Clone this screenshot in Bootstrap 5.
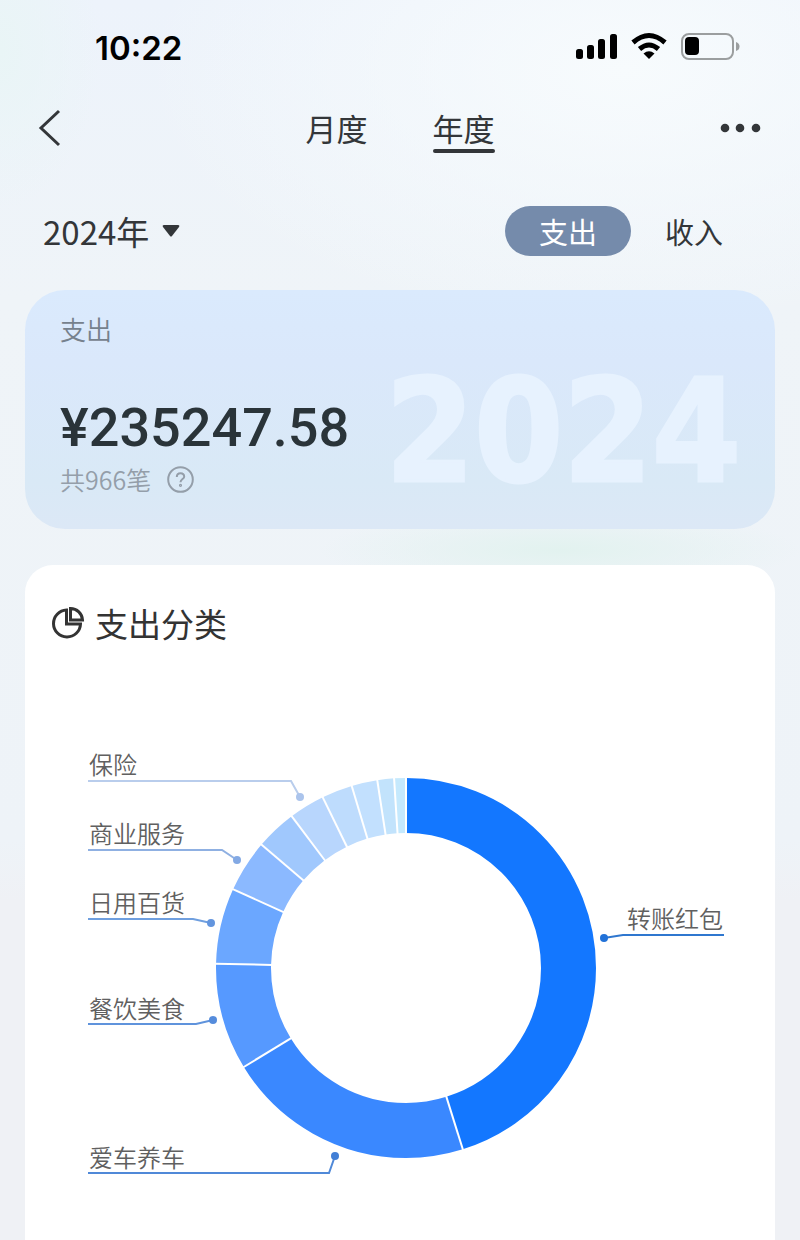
<!DOCTYPE html>
<html lang="zh-CN">
<head>
<meta charset="utf-8">
<meta name="viewport" content="width=device-width, initial-scale=1">
<title>年度账单</title>
<link href="https://cdn.jsdelivr.net/npm/bootstrap@5.3.0/dist/css/bootstrap.min.css" rel="stylesheet">
<style>
  body {
    font-family: "Noto Sans CJK SC", "Noto Sans", sans-serif;
    color: #333639;
    background:
      radial-gradient(240px 40px at 70% 550px, #e2f2ef, transparent),
      radial-gradient(100px 160px at 0 50px, #e9f5f6, transparent),
      radial-gradient(480px 260px at 78% 70px, #f7fbfd, transparent),
      linear-gradient(#edf3fb 0, #eff4f8 300px, #eef3f8 840px, #eff1f5 900px);
    min-height: 100vh;
  }
  .status-bar { padding: 24px 60px 0 95px; height: 72px; color: #000; }
  .clock { font: 600 33px/48px Inter, sans-serif; }
  .top-bar { display: grid; grid-template-columns: 1fr auto 1fr; height: 112px; padding: 0 38px; }
  .tab-link { font-size: 31px; line-height: 44px; padding: 2px 0; color: inherit; text-decoration: none; }
  .tab-link.active { position: relative; }
  .tab-link.active::after { content: ""; position: absolute; left: 0; right: 0; bottom: -1px; height: 4px; border-radius: 2px; background: #333639; }
  .tab-gap { gap: 65px; }
  .icon-btn { background: none; border: 0; padding: 0; line-height: 0; color: inherit; }
  .filter-bar { padding: 0 68px 0 43px; height: 50px; margin-top: 22px; }
  .year-btn { font-size: 33px; line-height: 50px; gap: 13px; }
  .kind-btn { font-size: 29px; line-height: 50px; height: 50px; padding: 0 34px; border: 0; border-radius: 25px; background: none; color: inherit; }
  .kind-btn.active { background: #758bab; color: #fff; }
  .kind-btn + .kind-btn { padding-right: 9px; }
  .page-body { padding: 34px 25px 0; }
  .total-card { border: 0; border-radius: 40px; height: 239px; padding: 20px 35px; background: linear-gradient(#daeafd 0, #dae8fb 30%, #d9e9f6 80%, #dce8f6 100%); overflow: hidden; }
  .total-label { font-size: 26px; line-height: 38px; color: #76818d; font-weight: 350; }
  .amount { font: 500 54px/64px Roboto, sans-serif; color: #2a3439; margin-top: 48px; }
  .count { font-size: 25px; line-height: 38px; color: #949ea9; font-weight: 350; gap: 16px; }
  .year-mark { position: absolute; right: 34px; bottom: 0; font: 700 142px/194px "DejaVu Sans Condensed", "DejaVu Sans", sans-serif; color: #e7f2fe; -webkit-text-stroke: 3px #e7f2fe; }
  .chart-card { border: 0; border-radius: 28px 28px 0 0; margin-top: 36px; }
  .chart-title { font-size: 33px; font-weight: 400; line-height: 50px; padding: 33px 26px 17px; gap: 10px; color: #333; }
  .ring circle { fill: none; stroke-width: 55; }
  .cuts line { stroke: #fff; stroke-width: 2; }
  .labels text { font-size: 24px; font-weight: 350; fill: #606060; }
  .labels path { fill: none; stroke-width: 2; }
</style>
</head>
<body>
<div class="status-bar d-flex justify-content-between">
  <span class="clock">10:22</span>
  <svg width="165" height="40" viewBox="0 0 165 40" aria-hidden="true" class="mt-1">
    <g transform="translate(0 -1)">
    <rect x="1" y="22" width="7" height="10" rx="2.500"/><rect x="12" y="18" width="7" height="14" rx="2.500"/><rect x="23" y="12" width="7" height="20" rx="2.500"/><rect x="35" y="7" width="7" height="25" rx="2.500"/>
    <g fill="none" stroke="#000" stroke-width="5"><path d="M58 15.500Q74 1.500 90 15.500"/><path d="M64.500 22Q74 14 83.500 22"/></g>
    <path d="M68.500 26.500Q74 22 79.500 26.500L74 32Z"/>
    <rect x="107" y="7" width="51" height="25" rx="7" fill="none" stroke="#9b9e9f" stroke-width="2"/>
    <rect x="110" y="10" width="14" height="18" rx="4"/><path d="M161 15q3.500 1 3.500 4.500t-3.500 4.500z" fill="#9b9e9f"/>
    </g>
  </svg>
</div>

<header class="top-bar align-items-center">
  <button class="icon-btn text-start" type="button" aria-label="返回">
    <svg width="24" height="38" viewBox="0 0 24 38"><path d="M21 2L3 19L21 36" fill="none" stroke="currentColor" stroke-width="3"/></svg>
  </button>
  <nav class="d-flex tab-gap">
    <a class="tab-link" href="#month">月度</a>
    <a class="tab-link active" href="#year" aria-current="page">年度</a>
  </nav>
  <button class="icon-btn text-end" type="button" aria-label="更多">
    <svg width="42" height="10" viewBox="0 0 42 10" fill="currentColor"><circle cx="5" cy="5" r="4.300"/><circle cx="20" cy="5" r="4.300"/><circle cx="36" cy="5" r="4.300"/></svg>
  </button>
</header>

<div class="filter-bar d-flex justify-content-between align-items-center">
  <button class="icon-btn year-btn d-flex align-items-center" type="button">2024年
    <svg width="18" height="12" viewBox="0 0 18 12"><path d="M2 0H16Q18 0 17 2L10 11Q9 12 8 11L1 2Q0 0 2 0Z" fill="currentColor"/></svg>
  </button>
  <div class="d-flex">
    <button class="kind-btn active" type="button">支出</button>
    <button class="kind-btn" type="button">收入</button>
  </div>
</div>

<main class="page-body">
  <section class="card total-card">
    <span class="year-mark" aria-hidden="true">2024</span>
    <div class="position-relative">
      <div class="total-label">支出</div>
      <div class="amount">¥235247.58</div>
      <div class="count d-flex align-items-center">共966笔
        <svg width="27" height="27" viewBox="0 0 27 27" fill="none" stroke="currentColor" stroke-width="2" role="img" aria-label="说明"><circle cx="13.500" cy="13.500" r="12.300"/><path d="M9.800 11Q9.800 7.200 13.500 7.200T17.200 10.700C17.200 13 13.500 13.200 13.500 16.200"/><circle cx="13.500" cy="19.300" r=".6"/></svg>
      </div>
    </div>
  </section>

  <section class="card chart-card">
    <h2 class="chart-title d-flex align-items-center mb-0">
      <svg width="34" height="34" viewBox="0 0 34 34" fill="none" stroke="currentColor" stroke-width="3" aria-hidden="true"><path d="M15.500 4A13.500 13.500 0 1 0 29.500 18H15.500Z"/><path d="M19.500 2.500V14H31.500A12 12 0 0 0 19.500 2.500Z"/></svg>
      支出分类
    </h2>
    <svg class="w-100 d-block" viewBox="-381 -303 750 575" role="img" aria-label="支出分类环形图">
      <g class="ring" transform="rotate(-90)">
        <circle r="162.500" pathLength="360" stroke="#1377ff" stroke-dasharray="162.600 360"/>
        <circle r="162.500" pathLength="360" stroke="#3a88ff" stroke-dasharray="76 360" stroke-dashoffset="-162.600"/>
        <circle r="162.500" pathLength="360" stroke="#5699ff" stroke-dasharray="32.700 360" stroke-dashoffset="-238.600"/>
        <circle r="162.500" pathLength="360" stroke="#6ba7ff" stroke-dasharray="23.200 360" stroke-dashoffset="-271.300"/>
        <circle r="162.500" pathLength="360" stroke="#8bb9ff" stroke-dasharray="16 360" stroke-dashoffset="-294.500"/>
        <circle r="162.500" pathLength="360" stroke="#a0c8fd" stroke-dasharray="12.500 360" stroke-dashoffset="-310.500"/>
        <circle r="162.500" pathLength="360" stroke="#b8d6fd" stroke-dasharray="11 360" stroke-dashoffset="-323"/>
        <circle r="162.500" pathLength="360" stroke="#bedcfd" stroke-dasharray="9.400 360" stroke-dashoffset="-334"/>
        <circle r="162.500" pathLength="360" stroke="#c2e0fe" stroke-dasharray="7.900 360" stroke-dashoffset="-343.400"/>
        <circle r="162.500" pathLength="360" stroke="#c2e3fc" stroke-dasharray="5.100 360" stroke-dashoffset="-351.300"/>
        <circle r="162.500" pathLength="360" stroke="#c5e9fd" stroke-dasharray="3.600 360" stroke-dashoffset="-356.400"/>
      </g>
      <g class="cuts">
        <line y1="-134" y2="-191"/>
        <line y1="-134" y2="-191" transform="rotate(162.600)"/>
        <line y1="-134" y2="-191" transform="rotate(238.600)"/>
        <line y1="-134" y2="-191" transform="rotate(271.300)"/>
        <line y1="-134" y2="-191" transform="rotate(294.500)"/>
        <line y1="-134" y2="-191" transform="rotate(310.500)"/>
        <line y1="-134" y2="-191" transform="rotate(323)"/>
        <line y1="-134" y2="-191" transform="rotate(334)"/>
        <line y1="-134" y2="-191" transform="rotate(343.400)"/>
        <line y1="-134" y2="-191" transform="rotate(351.300)"/>
        <line y1="-134" y2="-191" transform="rotate(356.400)"/>
      </g>
      <g class="labels">
        <text x="-317" y="-194">保险</text><path d="M-318-187H-115L-106-171" stroke="#b9cdec"/><circle cx="-106" cy="-171" r="4" fill="#abc4ec"/>
        <text x="-317" y="-125">商业服务</text><path d="M-318-118H-184L-169-108" stroke="#8fb0e2"/><circle cx="-169" cy="-108" r="4" fill="#83a9e4"/>
        <text x="-317" y="-56">日用百货</text><path d="M-318-49H-213L-195-45" stroke="#6f9fdf"/><circle cx="-195" cy="-45" r="4" fill="#6395de"/>
        <text x="-317" y="50">餐饮美食</text><path d="M-318 56H-210L-193 52" stroke="#5f93dc"/><circle cx="-193" cy="52" r="4" fill="#558cdc"/>
        <text x="-317" y="199">爱车养车</text><path d="M-318 205H-77L-71 188" stroke="#5089d8"/><circle cx="-71" cy="188" r="4" fill="#427fd6"/>
        <text x="221" y="-40">转账红包</text><path d="M318-33H217L198-30" stroke="#2f77cf"/><circle cx="198" cy="-30" r="4" fill="#2272d8"/>
      </g>
    </svg>
  </section>
</main>
<script src="https://cdn.jsdelivr.net/npm/bootstrap@5.3.0/dist/js/bootstrap.bundle.min.js"></script>
</body>
</html>
